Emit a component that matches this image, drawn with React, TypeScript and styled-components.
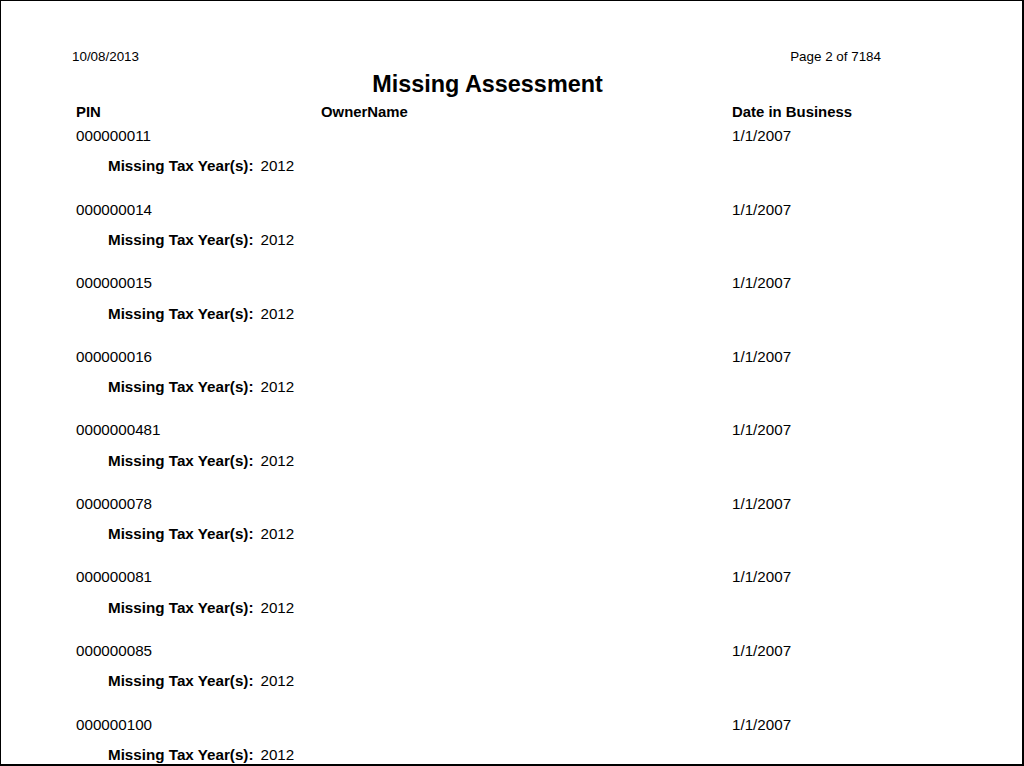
import React from "react";
import styled, { createGlobalStyle } from "styled-components";

const GlobalStyle = createGlobalStyle`
  html, body {
    margin: 0;
    padding: 0;
    background: #ffffff;
  }
  body {
    font-family: "Liberation Sans", Arial, sans-serif;
    color: #000000;
  }
`;

const Page = styled.div`
  box-sizing: border-box;
  width: 1024px;
  height: 766px;
  overflow: hidden;
  background: #ffffff;
  border-top: 1px solid #000;
  border-left: 1px solid #000;
  border-right: 2px solid #000;
  border-bottom: 2px solid #000;
  padding: 48px 0 0 71px;
`;

const Content = styled.div`
  width: 833px;
`;

const TopBar = styled.div`
  display: flex;
  justify-content: space-between;
  padding-right: 24px;
  font-size: 13.4px;
  line-height: 16px;
`;

const Title = styled.h1`
  margin: 5px 0 0;
  padding-right: 2px;
  text-align: center;
  font-size: 23.4px;
  line-height: 28px;
  font-weight: 700;
`;

const Columns = styled.div<{ bold?: boolean }>`
  display: grid;
  grid-template-columns: 245px 411px 1fr;
  margin-left: 4px;
  font-size: ${({ bold }) => (bold ? "14.9px" : "15.2px")};
  line-height: 18px;
  font-weight: ${({ bold }) => (bold ? 700 : 400)};
`;

const HeaderRow = styled(Columns)`
  margin-top: 5px;
`;

const Record = styled.div<{ first?: boolean }>`
  margin-top: ${({ first }) => (first ? "6px" : "25.2px")};
`;

const MissingLine = styled.div`
  display: flex;
  gap: 7px;
  margin: 12.4px 0 0 36px;
  font-size: 15.2px;
  line-height: 18px;
`;

const Label = styled.span`
  font-weight: 700;
`;

const records = [
  "000000011",
  "000000014",
  "000000015",
  "000000016",
  "0000000481",
  "000000078",
  "000000081",
  "000000085",
  "000000100",
];

const App: React.FC = () => {
  return (
    <>
      <GlobalStyle />
      <Page>
        <Content>
          <TopBar>
            <span>10/08/2013</span>
            <span>Page 2 of 7184</span>
          </TopBar>
          <Title>Missing Assessment</Title>
          <HeaderRow bold>
            <span>PIN</span>
            <span>OwnerName</span>
            <span>Date in Business</span>
          </HeaderRow>
          {records.map((pin, i) => (
            <Record key={pin} first={i === 0}>
              <Columns>
                <span>{pin}</span>
                <span></span>
                <span>1/1/2007</span>
              </Columns>
              <MissingLine>
                <Label>Missing Tax Year(s):</Label>
                <span>2012</span>
              </MissingLine>
            </Record>
          ))}
        </Content>
      </Page>
    </>
  );
};

export default App;
